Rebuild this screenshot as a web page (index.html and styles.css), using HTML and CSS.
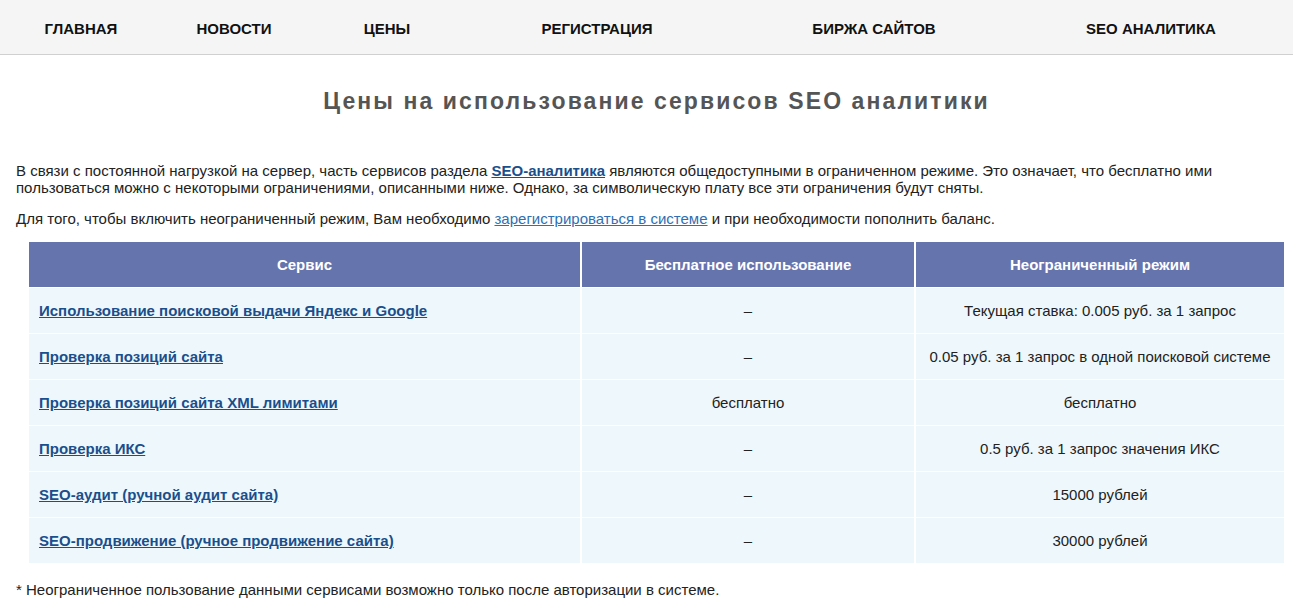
FILE: index.html
```html
<!DOCTYPE html>
<html lang="ru">
<head>
  <meta charset="UTF-8" />
  <meta name="viewport" content="width=device-width, initial-scale=1.0"/>
  <title>Цены - SEO аналитика</title>
  <link rel="stylesheet" href="styles.css">
</head>
<body>
  <nav class="menu">
    <a href="#">Главная</a>
    <a href="#">Новости</a>
    <a href="#">Цены</a>
    <a href="#">Регистрация</a>
    <a href="#">Биржа сайтов</a>
    <a href="#">SEO аналитика</a>
  </nav>

  <div class="content">
    <h1 class="title">Цены на использование сервисов SEO аналитики</h1>

    <p>В связи с постоянной нагрузкой на сервер, часть сервисов раздела <a href="#" class="strong-link">SEO-аналитика</a> являются общедоступными в ограниченном режиме. Это означает, что бесплатно ими пользоваться можно с некоторыми ограничениями, описанными ниже. Однако, за символическую плату все эти ограничения будут сняты.</p>
    <p>Для того, чтобы включить неограниченный режим, Вам необходимо <a href="#" class="plain-link">зарегистрироваться в системе</a> и при необходимости пополнить баланс.</p>

    <!-- Price table -->
    <table class="prices">
      <thead>
        <tr>
          <th class="col-service">Сервис</th>
          <th class="col-free">Бесплатное использование</th>
          <th>Неограниченный режим</th>
        </tr>
      </thead>
      <tbody>
        <tr>
          <td><a href="#">Использование поисковой выдачи Яндекс и Google</a></td>
          <td>–</td>
          <td>Текущая ставка: 0.005 руб. за 1 запрос</td>
        </tr>
        <tr>
          <td><a href="#">Проверка позиций сайта</a></td>
          <td>–</td>
          <td>0.05 руб. за 1 запрос в одной поисковой системе</td>
        </tr>
        <tr>
          <td><a href="#">Проверка позиций сайта XML лимитами</a></td>
          <td>бесплатно</td>
          <td>бесплатно</td>
        </tr>
        <tr>
          <td><a href="#">Проверка ИКС</a></td>
          <td>–</td>
          <td>0.5 руб. за 1 запрос значения ИКС</td>
        </tr>
        <tr>
          <td><a href="#">SEO-аудит (ручной аудит сайта)</a></td>
          <td>–</td>
          <td>15000 рублей</td>
        </tr>
        <tr>
          <td><a href="#">SEO-продвижение (ручное продвижение сайта)</a></td>
          <td>–</td>
          <td>30000 рублей</td>
        </tr>
      </tbody>
    </table>

    <p class="note">* Неограниченное пользование данными сервисами возможно только после авторизации в системе.</p>
  </div>
</body>
</html>
```

FILE: styles.css
```css
body {
  font-family: "Liberation Sans", Arial, sans-serif;
  font-size: 15px;
  color: #222;
  background: #fff;
  margin: 0;
  padding: 0;
}

.menu {
  display: grid;
  grid-template-columns: 162fr 144fr 162fr 258fr 296fr 258fr;
  height: 55px;
  padding: 3px 13px 0 0;
  align-items: center;
  background: #f5f5f5;
  border-bottom: 1px solid #d0d0d0;
  box-sizing: border-box;
}

.menu a {
  text-align: center;
  color: #111;
  font-weight: bold;
  font-size: 15px;
  text-transform: uppercase;
  text-decoration: none;
}

.content {
  padding: 0 16px;
}

.title {
  margin: 33px 0 0;
  padding-left: 20px;
  text-align: center;
  font-size: 23px;
  letter-spacing: 2.1px;
  color: #555;
  line-height: 26px;
}

p {
  margin: 0;
  line-height: 17px;
}

.title + p {
  margin-top: 48px;
}

p + p {
  margin-top: 14px;
}

.strong-link {
  color: #1b4f8c;
  font-weight: bold;
}

.plain-link {
  color: #2f6fb3;
}

.prices {
  width: 1255px;
  margin: 15px 0 0 13px;
  border-collapse: collapse;
}

.prices th {
  background: #6674ae;
  color: #fff;
  font-weight: bold;
  height: 45px;
  border-right: 2px solid #fff;
  padding: 0;
}

.prices th:last-child,
.prices td:last-child {
  border-right: none;
}

.col-service {
  width: 551px;
}

.col-free {
  width: 332px;
}

.prices td {
  background: #eef8fc;
  height: 45px;
  text-align: center;
  border-right: 2px solid #fff;
  border-top: 1px solid #fff;
  padding: 0;
}

.prices td:first-child {
  text-align: left;
  padding-left: 10px;
}

.prices td a {
  color: #1b4f8c;
  font-weight: bold;
}

.note {
  margin-top: 18px;
}
```
